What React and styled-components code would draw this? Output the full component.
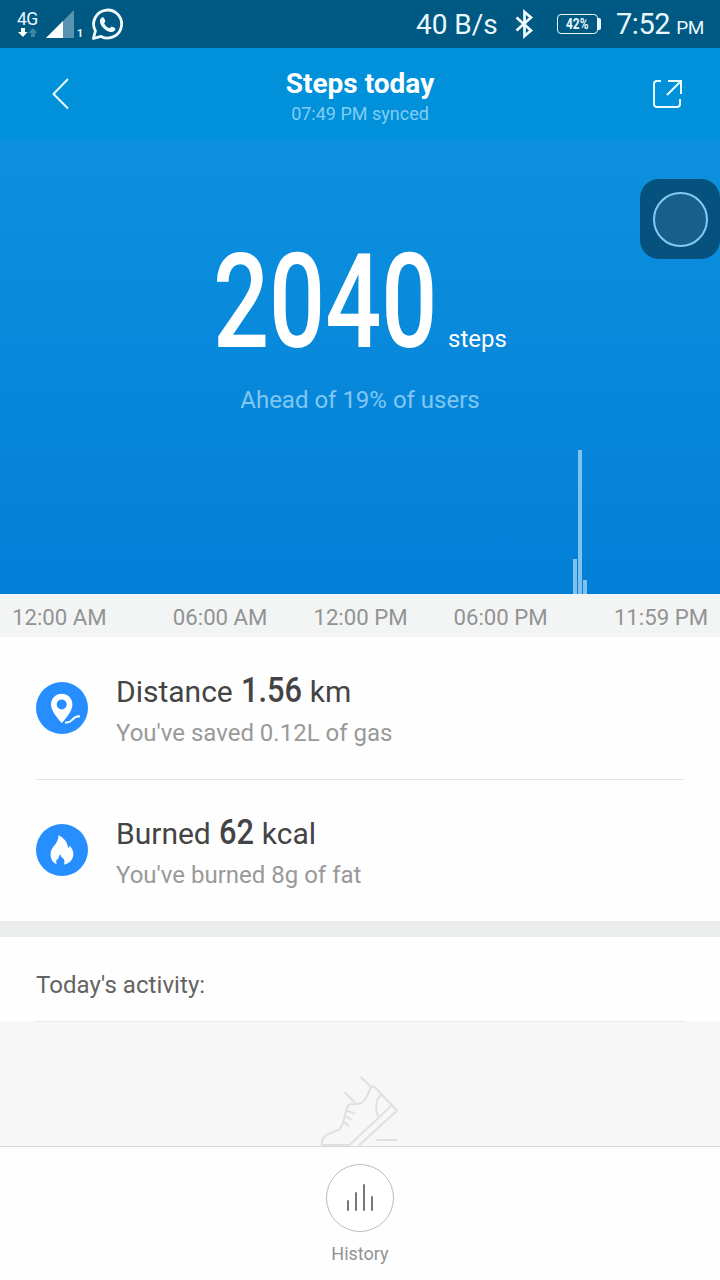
import React from "react";
import styled, { createGlobalStyle } from "styled-components";

const Global = createGlobalStyle`
  * { box-sizing: border-box; }
  body { margin: 0; font-family: Roboto, "Noto Sans", sans-serif; background: #fff; }
`;

const Screen = styled.div`
  width: 720px;
  height: 1280px;
  display: flex;
  flex-direction: column;
  position: relative;
  overflow: hidden;
  white-space: nowrap;
  background: #fefefe;
`;

const StatusBar = styled.div`
  height: 48px;
  flex: none;
  display: flex;
  justify-content: space-between;
  background: #005982;
  color: #e9f8ff;
  padding: 0 16px 0 17px;
`;
const StatusGroup = styled.div`
  display: flex;
  align-items: ${(p) => p.$align || "flex-start"};
`;
const Network = styled.div`
  display: flex;
  flex-direction: column;
  width: 28px;
  padding-top: 9px;
`;
const NetworkType = styled.span`
  font-size: 17.5px;
  line-height: 20px;
  height: 19px;
  letter-spacing: -0.6px;
`;
const SimIndex = styled.span`
  font-size: 10.5px;
  font-weight: 700;
  line-height: 12px;
  padding: 28px 0 0 2px;
  width: 16.5px;
`;
const Speed = styled.span`
  font-size: 28px;
  line-height: 51px;
  width: 98px;
`;
const Clock = styled.span`
  font-size: 29px;
  line-height: 51px;
  letter-spacing: -0.4px;
  margin-left: 15px;
`;
const Meridiem = styled.span`
  font-size: 19px;
  line-height: 1;
  margin-left: 6px;
`;
const Battery = styled.div`
  width: 41px;
  height: 20px;
  border: 1.6px solid #e9f8ff;
  border-radius: 4px;
  font-size: 14px;
  font-weight: 700;
  line-height: 18.5px;
  display: flex;
  justify-content: center;
  margin-left: 23px;
`;
const BatteryTip = styled.div`
  width: 3px;
  height: 12px;
  border-radius: 0 2px 2px 0;
  background: #e9f8ff;
`;

const Header = styled.header`
  height: 92px;
  flex: none;
  display: flex;
  justify-content: space-between;
  background: #0091da;
  padding: 0 36px 0 50px;
`;
const HeaderSlot = styled.div`
  width: 34px;
  padding-top: 28px;
`;
const Titles = styled.div`
  display: flex;
  flex-direction: column;
  align-items: center;
  padding: 20px 14px 0 0;
  flex: 1;
`;
const Title = styled.h1`
  margin: 0;
  font-size: 28px;
  font-weight: 700;
  line-height: 32px;
  color: #fff;
`;
const Synced = styled.span`
  font-size: 18px;
  line-height: 24px;
  margin-top: 2px;
  color: #82cdf3;
`;

const Hero = styled.section`
  height: 454px;
  flex: none;
  display: flex;
  flex-direction: column;
  align-items: center;
  background: linear-gradient(#0d91de, #027fd7);
`;
const Total = styled.div`
  display: flex;
  align-items: baseline;
  padding-top: 82px;
  height: 245px;
  color: #fff;
`;
const Count = styled.span`
  width: 227px;
  font-size: 132px;
  font-weight: 500;
  line-height: 160px;
`;
const Squeeze = styled.span`
  display: inline-block;
  transform: scaleX(${(p) => p.$by});
  transform-origin: ${(p) => p.$origin || "left"};
`;
const Unit = styled.span`
  font-size: 24px;
  margin-left: 8px;
`;
const Rank = styled.p`
  margin: 0;
  font-size: 24px;
  line-height: 30px;
  color: #80c7f2;
`;
const Chart = styled.div`
  flex: 1;
  align-self: stretch;
  display: flex;
  align-items: flex-end;
  gap: 1px;
  padding-left: 572.7px;
`;
const Bar = styled.div`
  width: 4.2px;
  background: #80c1ed;
`;

const Axis = styled.div`
  height: 43px;
  flex: none;
  display: flex;
  justify-content: space-between;
  padding: 0 12px;
  background: #f3f5f5;
  color: #929393;
  font-size: 22.2px;
  line-height: 47px;
`;
const AxisMiddle = styled.div`
  display: flex;
  gap: 46px;
`;

const Metric = styled.div`
  height: ${(p) => p.$height}px;
  flex: none;
  margin: 0 36px;
  display: flex;
  align-items: flex-start;
  gap: 28px;
  padding-top: ${(p) => p.$top}px;
  border-bottom: ${(p) => (p.$divider ? "1px solid #e2e2e2" : "none")};
`;
const MetricIcon = styled.div`
  width: 52px;
  height: 52px;
  margin-top: 11px;
  border-radius: 50%;
  background: #268eff;
`;
const MetricText = styled.div``;
const MetricTitle = styled.div`
  height: 40px;
  line-height: 40px;
  font-size: 30px;
  color: #444;
  display: flex;
  align-items: baseline;
`;
const MetricValue = styled.span`
  font-size: 35px;
  font-weight: 500;
  width: ${(p) => p.$width}px;
  margin: 0 8px;
`;
const MetricNote = styled.div`
  font-size: 24px;
  line-height: 30px;
  margin-top: 7px;
  color: #999;
`;

const Gap = styled.div`
  height: 16px;
  flex: none;
  background: #ebeded;
`;
const SectionTitle = styled.h2`
  margin: 0 36px;
  height: 84px;
  flex: none;
  padding-top: 33px;
  font-size: 24px;
  font-weight: 400;
  line-height: 30px;
  letter-spacing: 0.06px;
  color: #636363;
`;
const Empty = styled.div`
  flex: 1;
  display: flex;
  justify-content: center;
  align-items: flex-end;
  background: #f7f7f7;
`;
const Rule = styled.div`
  height: 1px;
  flex: none;
  margin: 0 36px -1px;
  background: #ebebeb;
  z-index: 1;
`;
const Footer = styled.footer`
  height: 134px;
  flex: none;
  border-top: 1px solid #d8d8d8;
  display: flex;
  flex-direction: column;
  align-items: center;
  padding-top: 17px;
`;
const HistoryButton = styled.button`
  width: 68px;
  height: 68px;
  padding: 0;
  border: 1px solid #bcbcbc;
  border-radius: 50%;
  background: #fff;
`;
const FooterLabel = styled.span`
  font-size: 18px;
  line-height: 24px;
  margin-top: 10px;
  color: #929292;
`;

const AssistiveButton = styled.div`
  position: absolute;
  left: 640px;
  top: 179px;
  width: 80px;
  height: 80px;
  border-radius: 19px;
  background: #05527f;
  display: flex;
  align-items: center;
  justify-content: center;
`;
const AssistiveRing = styled.div`
  width: 55px;
  height: 55px;
  border-radius: 50%;
  border: 2.4px solid #83cbf5;
  background: #17608c;
`;

const bars = [35, 144, 14];

export default function App() {
  return (
    <Screen>
      <Global />
      <StatusBar>
        <StatusGroup>
          <Network>
            <NetworkType>4G</NetworkType>
            <svg width="21" height="10" viewBox="0 0 21 10">
              <path d="M4 0h4v4h2.500L6 9 1 4h3z" fill="#fff" />
              <path d="M14 9h4V5h2.500L16 0l-5 5h3z" fill="#3d83a5" />
            </svg>
          </Network>
          <svg width="30" height="40" viewBox="0 0 30 40">
            <path d="M29 10v28H1z" fill="#5993b1" />
            <path d="M18 21v17H1z" fill="#fff" />
          </svg>
          <SimIndex>1</SimIndex>
          <svg width="32" height="41" viewBox="0 0 32 41">
            <path d="M1.400 38.500l2-7.600A14 14 0 1 1 9 36.400z" fill="none" stroke="#f2fcff" strokeWidth="2.800" strokeLinejoin="round" />
            <path transform="translate(1 2.700) scale(.9)" d="M9 17c2-1.700 3-1 3.700.8l1 2.500c.3 1-1.500 2.200-1.300 2.700 1.400 2.600 3.300 4.300 6 5.400.8.2 1.700-2 2.500-1.900l3.500 1.700c1.200.6-.2 3.200-1.400 3.900-2.500 1.300-6 .1-8.900-1.900-3.300-2.300-5.900-5.700-6.300-8.500-.2-1.900.2-3.700 1.200-4.700z" fill="#f2fcff" />
          </svg>
        </StatusGroup>
        <StatusGroup $align="center">
          <Speed>40 B/s</Speed>
          <svg width="20" height="30" viewBox="0 0 20 30">
            <path d="M2.500 8.500L17 21.500l-6.500 5.500V3L17 8.500 2.500 21.500" fill="none" stroke="#f2fcff" strokeWidth="2.700" strokeLinejoin="miter" />
          </svg>
          <Battery>
            <Squeeze $by={0.85} $origin="center">42%</Squeeze>
          </Battery>
          <BatteryTip />
          <Clock>
            7:52<Meridiem>PM</Meridiem>
          </Clock>
        </StatusGroup>
      </StatusBar>

      <Header>
        <HeaderSlot>
          <svg width="22" height="36" viewBox="0 0 22 36">
            <path d="M18 3L3.500 18 18 32.500" fill="none" stroke="#e8fbff" strokeWidth="2" />
          </svg>
        </HeaderSlot>
        <Titles>
          <Title>Steps today</Title>
          <Synced>07:49 PM synced</Synced>
        </Titles>
        <HeaderSlot>
          <svg width="34" height="36" viewBox="0 0 34 36">
            <path d="M11 5H7a3 3 0 0 0-3 3v20a3 3 0 0 0 3 3h20a3 3 0 0 0 3-3v-5M18 5h13v13M30.500 5.500L17 19" fill="none" stroke="#e8fbff" strokeWidth="2" />
          </svg>
        </HeaderSlot>
      </Header>

      <Hero>
        <Total>
          <Count>
            <Squeeze $by={0.748}>2040</Squeeze>
          </Count>
          <Unit>steps</Unit>
        </Total>
        <Rank>Ahead of 19% of users</Rank>
        <Chart>
          {bars.map((h, i) => (
            <Bar key={i} style={{ height: h }} />
          ))}
        </Chart>
      </Hero>

      <Axis>
        <span>12:00 AM</span>
        <AxisMiddle>
          <span>06:00 AM</span>
          <span>12:00 PM</span>
          <span>06:00 PM</span>
        </AxisMiddle>
        <span>11:59 PM</span>
      </Axis>

      <Metric $height={143} $top={34} $divider>
        <MetricIcon>
          <svg width="52" height="52" viewBox="0 0 52 52">
            <path fillRule="evenodd" d="M25.700 11.700a10.700 10.700 0 0 1 10.700 10.700C36.400 29 30 36 25.700 41c-4-5-10.700-12-10.700-18.600A10.700 10.700 0 0 1 25.700 11.700zm0 5.800a5 5 0 1 0 0 10 5 5 0 0 0 0-10z" fill="#fff" />
            <path d="M29 40.500c4 .5 5.500-.5 7.500-3s4-3.500 7.500-3.300" fill="none" stroke="#fff" strokeWidth="2" />
          </svg>
        </MetricIcon>
        <MetricText>
          <MetricTitle>
            Distance
            <MetricValue $width={61}>
              <Squeeze $by={0.88}>1.56</Squeeze>
            </MetricValue>
            km
          </MetricTitle>
          <MetricNote>You've saved 0.12L of gas</MetricNote>
        </MetricText>
      </Metric>
      <Metric $height={141} $top={33}>
        <MetricIcon>
          <svg width="52" height="52" viewBox="0 0 52 52">
            <path d="M22.500 11.300C28 14 31.500 18 32 24c1-.6 1.300-1.300 1.400-2.300C36 24 37.500 27 37.400 30c-.2 4.500-2.400 7.700-6.200 9.600-2 .9-2.200.9-3.200.9 1-2.500.4-4.800-.8-6-1.200-.8-2.600-1.600-2.600-4.200-1.800 1.200-1.600 3.200-2.800 5.400-.5-.3-.7-.6-.8-1-1 2-1 3.700-.2 5.500-4-1.500-6.300-5.200-6.200-10.200.2-7.500 7.900-9.700 7.900-18.700z" fill="#fff" />
          </svg>
        </MetricIcon>
        <MetricText>
          <MetricTitle>
            Burned
            <MetricValue $width={35}>
              <Squeeze $by={0.88}>62</Squeeze>
            </MetricValue>
            kcal
          </MetricTitle>
          <MetricNote>You've burned 8g of fat</MetricNote>
        </MetricText>
      </Metric>

      <Gap />
      <SectionTitle>Today's activity:</SectionTitle>
      <Rule />
      <Empty>
        <svg width="80" height="72" viewBox="0 0 80 72">
          <g fill="none" stroke="#e0e0e0" strokeWidth="2" strokeLinejoin="round">
            <path d="M1.500 71.500c0-5 2-9.500 6-11.200l11.800-4.500 3.400-6L27 34c.7-2.500 1.600-3.700 4-3.700 8.500.5 13-1.300 16.300-8.600l3-7c1-2.200 3.200-2.700 5-1L77 36.700 38.700 71.500M1.500 71h28L71.500 31.500" />
            <path d="M24.300 17.700l11 11.300M40.300 2.700L51 13M61 20.500c-5.500 5.500-6 14-2.700 22M27 36.700l8.300 3M25.300 42l6 3.700M24.300 48.300l4.400 3.700M56.300 66h21.400" />
          </g>
        </svg>
      </Empty>
      <Footer>
        <HistoryButton aria-label="History">
          <svg width="66" height="66" viewBox="0 0 66 66">
            <path d="M21 36v9M29 28v17M37 20v25M45 32v13" stroke="#777" strokeWidth="2" strokeLinecap="round" />
          </svg>
        </HistoryButton>
        <FooterLabel>History</FooterLabel>
      </Footer>

      <AssistiveButton>
        <AssistiveRing />
      </AssistiveButton>
    </Screen>
  );
}
